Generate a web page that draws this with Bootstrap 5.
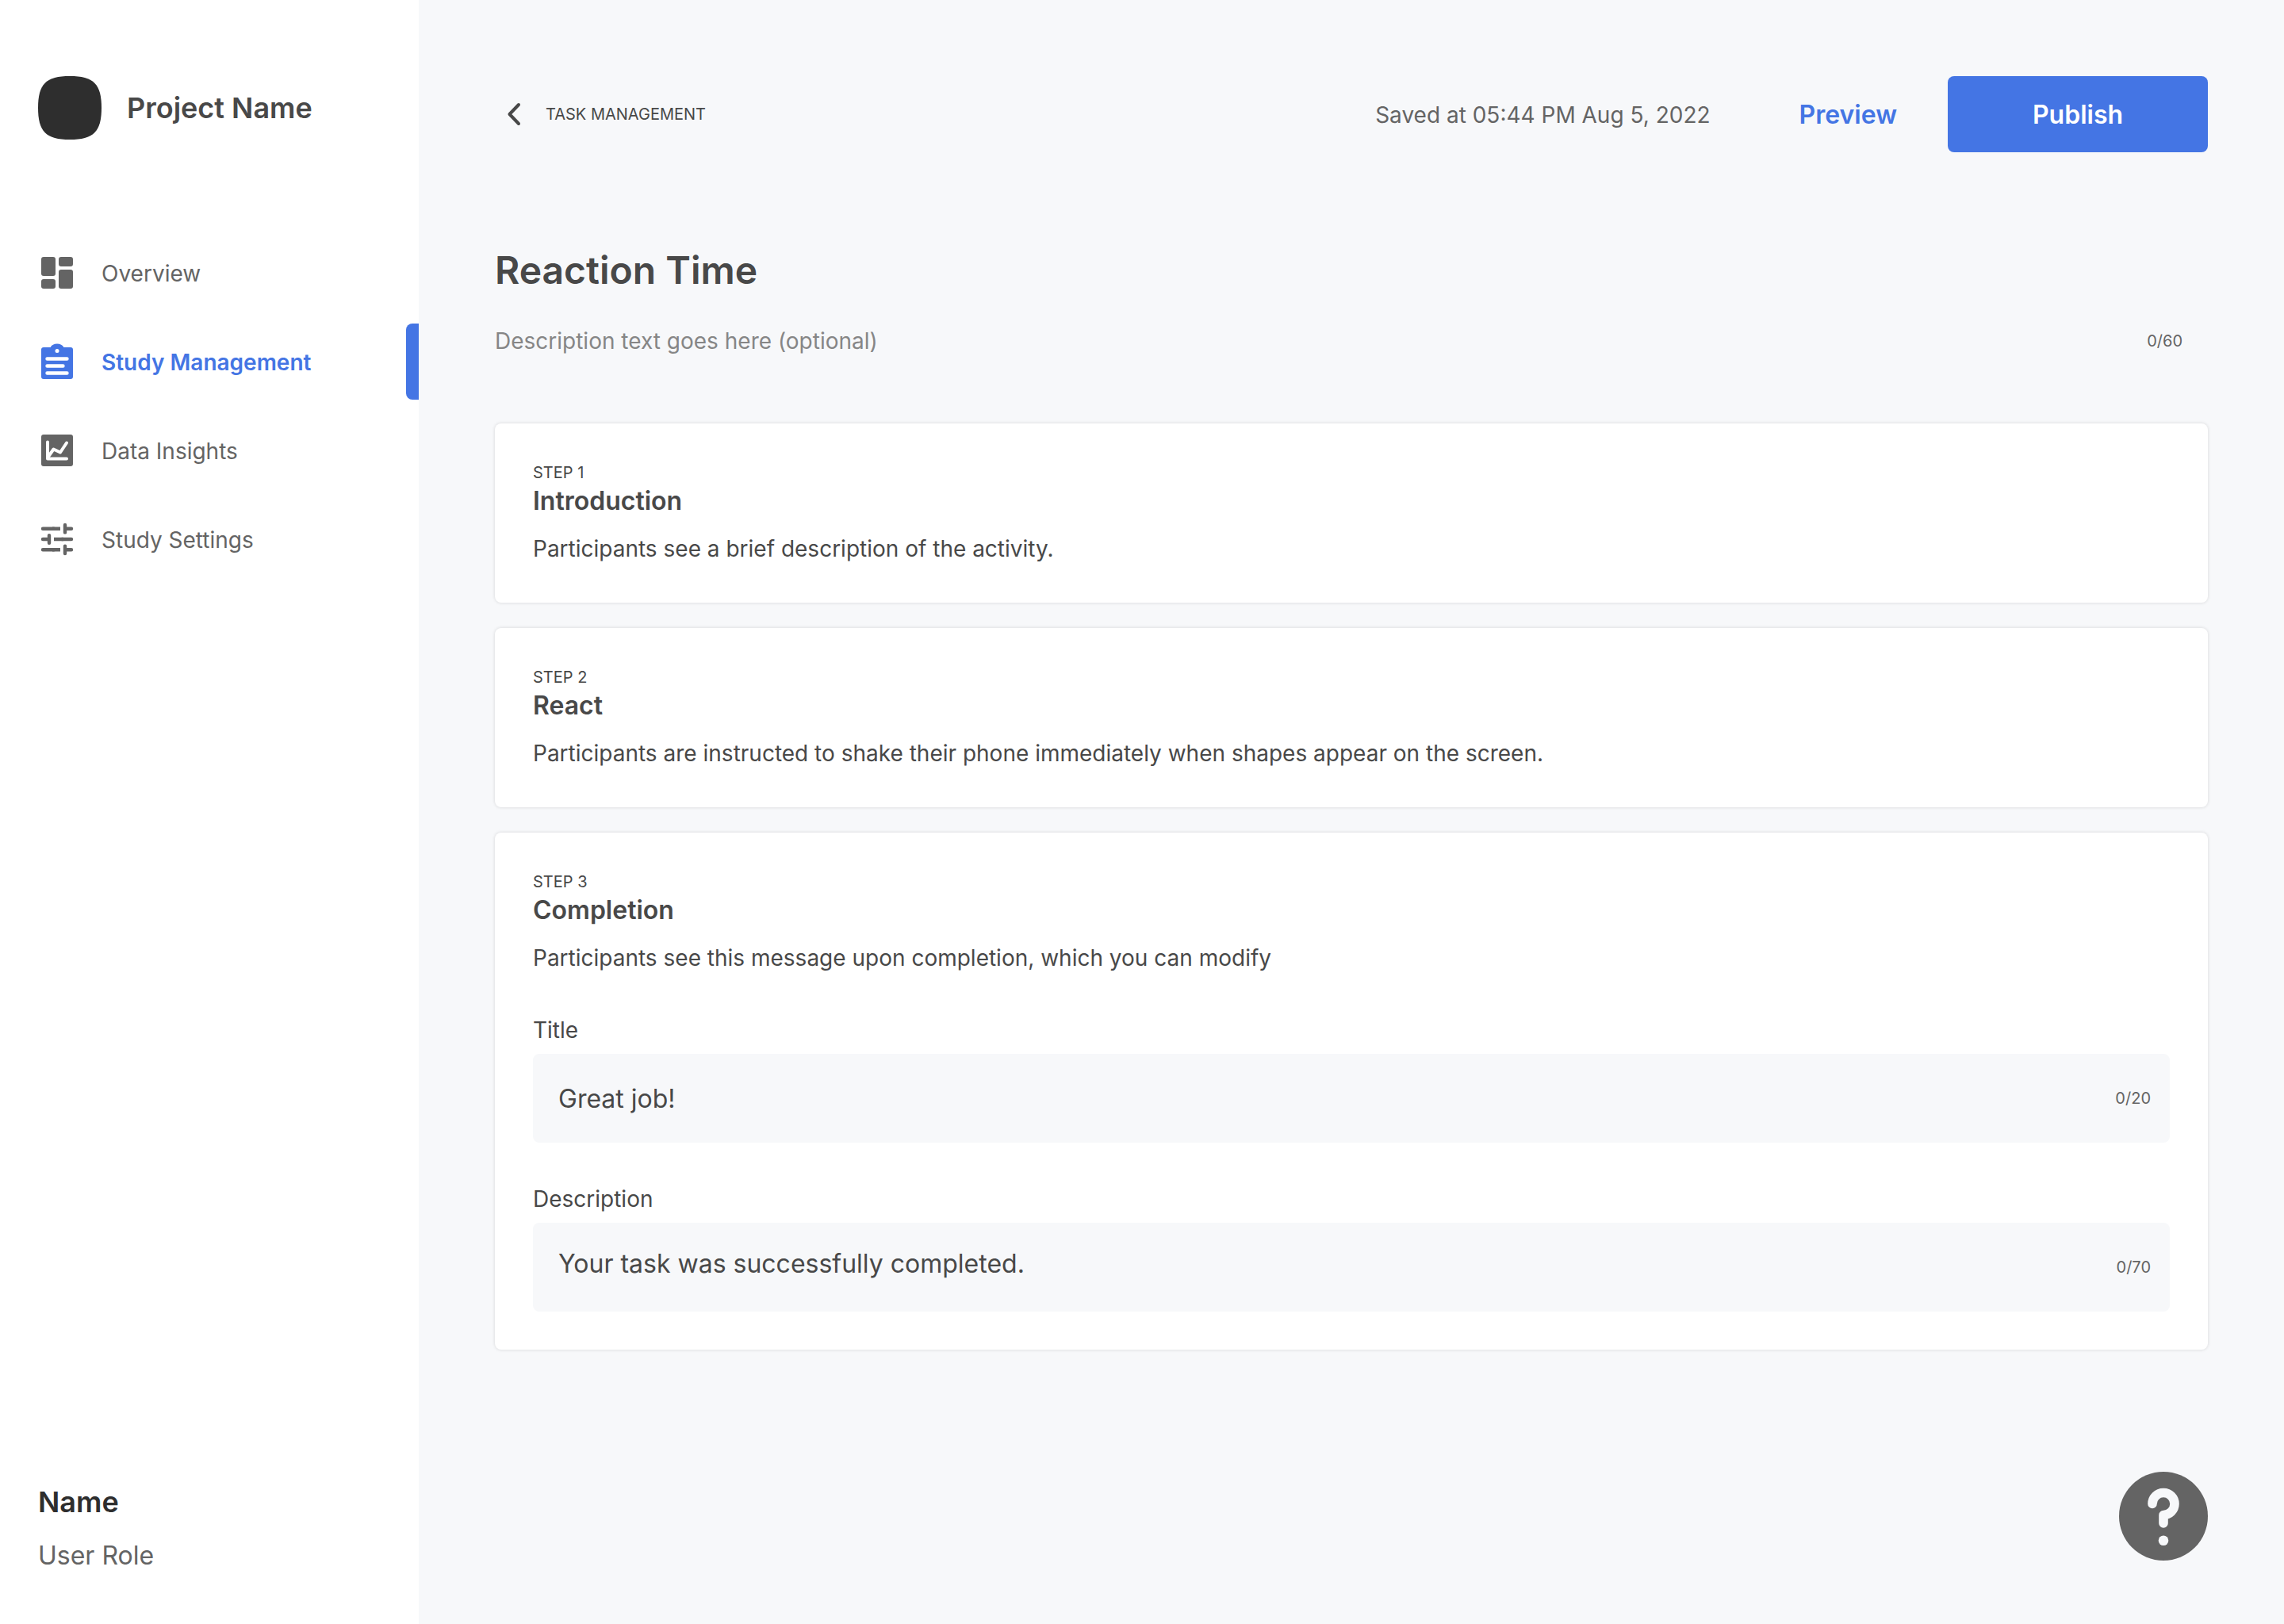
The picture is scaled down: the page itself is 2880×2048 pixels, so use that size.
<!DOCTYPE html>
<html lang="en">
<head>
<meta charset="utf-8">
<meta name="viewport" content="width=device-width, initial-scale=1">
<title>Reaction Time</title>
<link href="https://cdn.jsdelivr.net/npm/bootstrap@5.3.0/dist/css/bootstrap.min.css" rel="stylesheet">
<style>
:root { --blue: #4475e4; --ink: #484848; --muted: #646464; --canvas: #f7f8fa; }
body { font-family: Inter, "Liberation Sans", sans-serif; font-size: 28px; line-height: 40px; color: var(--ink); background: var(--canvas); }
a { text-decoration: none; }
.sidebar { width: 528px; padding: 96px 0 62px 48px; }
.brand { height: 80px; gap: 32px; font-size: 36px; font-weight: 600; margin-bottom: 120px; }
.side-nav { gap: 16px; }
.side-nav .nav-link { height: 96px; padding: 0; gap: 32px; color: var(--muted); }
.side-nav .nav-link span, .topbar .saved { padding-top: 2px; }
.side-nav .nav-link.active { color: var(--blue); font-weight: 600; }
.side-nav .nav-link.active::after { content: ""; width: 16px; height: 96px; margin-left: auto; background: var(--blue); border-radius: 8px 0 0 8px; }
.user-name { font-size: 36px; line-height: 56px; font-weight: 600; color: #2e2e2e; }
.user-role { font-size: 32px; line-height: 48px; color: var(--muted); margin-top: 16px; }
.workspace { padding: 96px 96px 80px; }
.topbar { height: 96px; }
.back-link { gap: 16px; padding-left: 0; font-size: 20px; color: var(--ink); }
.saved { color: var(--muted); }
.btn-preview, .btn-publish { font-size: 32px; font-weight: 600; line-height: 48px; border: 0; padding-top: 25px; padding-bottom: 23px; }
.btn-preview { color: var(--blue); padding-left: 112px; padding-right: 64px; }
.btn-publish { width: 328px; height: 96px; border-radius: 8px; color: #fff; background: var(--blue); }
.page-title { font-size: 48px; line-height: 64px; font-weight: 600; margin: 117px 0 0; }
.desc-row { height: 80px; margin: 17px 0 64px; padding-right: 32px; }
.desc-row .form-control { font-size: 28px; line-height: 40px; padding: 0; }
.desc-row .form-control::placeholder { color: #868686; opacity: 1; }
.counter { font-size: 20px; line-height: 28px; color: var(--muted); }
.steps { gap: 32px; }
.step-card { padding: 48px; border: 0; border-radius: 8px; color: var(--ink); box-shadow: 0 0 4px rgba(0, 0, 0, .14); }
.step-label { font-size: 20px; line-height: 28px; }
.step-title { font-size: 32px; line-height: 44px; font-weight: 600; margin: 0 0 18px; }
.field { margin-top: 51px; }
.field-label { margin-bottom: 10px; }
.field-box { height: 112px; padding-right: 24px; border-radius: 8px; background: var(--canvas); }
.field-box .form-control { height: 112px; padding: 28px 32px; font-size: 32px; line-height: 48px; color: var(--ink); resize: none; overflow: hidden; }
.field-box input.form-control { padding: 32px; }
</style>
</head>
<body>
<div class="d-flex min-vh-100">
  <aside class="sidebar bg-white d-flex flex-column flex-shrink-0">
    <div class="brand d-flex align-items-center">
      <svg width="80" height="80" viewBox="0 0 80 80" fill="#2e2e2e" aria-hidden="true"><path d="M40 0C70 0 80 10 80 40S70 80 40 80 0 70 0 40 10 0 40 0Z"/></svg>
      <span>Project Name</span>
    </div>
    <nav class="side-nav nav flex-column flex-nowrap">
      <a class="nav-link d-flex align-items-center" href="#">
        <svg width="48" height="48" viewBox="0 0 48 48" fill="currentColor" aria-hidden="true"><rect x="4" y="4" width="18" height="24" rx="3"/><rect x="26" y="4" width="18" height="12" rx="3"/><rect x="4" y="32" width="18" height="12" rx="3"/><rect x="26" y="20" width="18" height="24" rx="3"/></svg>
        <span>Overview</span>
      </a>
      <a class="nav-link active d-flex align-items-center" href="#" aria-current="page">
        <svg width="48" height="48" viewBox="0 0 48 48" aria-hidden="true"><path fill="currentColor" d="M7 6H15.600C17 3.400 20.200 1.600 24 1.600S31 3.400 32.400 6H41A3 3 0 0 1 44 9V43A3 3 0 0 1 41 46H7A3 3 0 0 1 4 43V9A3 3 0 0 1 7 6Z"/><circle cx="24" cy="10.500" r="2.500" fill="#fff"/><path stroke="#fff" stroke-width="4.400" stroke-linecap="round" d="M11.500 20.500H36.500M11.500 29.500H31.500M11.500 38.500H36.500"/></svg>
        <span>Study Management</span>
      </a>
      <a class="nav-link d-flex align-items-center" href="#">
        <svg width="48" height="48" viewBox="0 0 48 48" fill="none" aria-hidden="true"><rect x="4" y="4" width="40" height="40" rx="3" fill="currentColor"/><g stroke="#fff" stroke-width="4" stroke-linecap="round" stroke-linejoin="round"><path d="M12 13.500V34.500H36"/><path d="M12.500 32.500L19.500 22.500L28 26.500L36 14.500"/></g></svg>
        <span>Data Insights</span>
      </a>
      <a class="nav-link d-flex align-items-center" href="#">
        <svg width="48" height="48" viewBox="0 0 48 48" fill="none" stroke="currentColor" stroke-width="4.400" aria-hidden="true"><path stroke-linecap="round" d="M6 10.700H20M34 6V15.400M34 10.700H42M6 24H14M14 19.300V28.700M30 24H42M6 37.300H20M34 32.600V42M34 37.300H42"/><path d="M18 10.700H28M20 24H32M18 37.300H28"/></svg>
        <span>Study Settings</span>
      </a>
    </nav>
    <div class="mt-auto">
      <div class="user-name">Name</div>
      <div class="user-role">User Role</div>
    </div>
  </aside>

  <main class="workspace flex-grow-1 d-flex flex-column">
    <header class="topbar d-flex align-items-center">
      <a class="back-link d-flex align-items-center" href="#">
        <svg width="48" height="48" viewBox="0 0 48 48" fill="none" stroke="currentColor" stroke-width="4" stroke-linecap="round" stroke-linejoin="round" aria-hidden="true"><path d="M30 12L18.500 24L30 36"/></svg>
        <span>TASK MANAGEMENT</span>
      </a>
      <span class="saved ms-auto">Saved at 05:44 PM Aug 5, 2022</span>
      <button type="button" class="btn btn-preview">Preview</button>
      <button type="button" class="btn btn-publish">Publish</button>
    </header>

    <h1 class="page-title">Reaction Time</h1>
    <div class="desc-row d-flex align-items-center">
      <input type="text" class="form-control border-0 bg-transparent shadow-none" placeholder="Description text goes here (optional)" aria-label="Task description">
      <span class="counter">0/60</span>
    </div>

    <div class="steps d-flex flex-column">
      <section class="card step-card">
        <div class="step-label">STEP 1</div>
        <h2 class="step-title">Introduction</h2>
        <p class="mb-0">Participants see a brief description of the activity.</p>
      </section>
      <section class="card step-card">
        <div class="step-label">STEP 2</div>
        <h2 class="step-title">React</h2>
        <p class="mb-0">Participants are instructed to shake their phone immediately when shapes appear on the screen.</p>
      </section>
      <section class="card step-card">
        <div class="step-label">STEP 3</div>
        <h2 class="step-title">Completion</h2>
        <p class="mb-0">Participants see this message upon completion, which you can modify</p>
        <div class="field">
          <label class="field-label d-block" for="done-title">Title</label>
          <div class="field-box d-flex align-items-center">
            <input type="text" id="done-title" class="form-control border-0 bg-transparent shadow-none" value="Great job!">
            <span class="counter">0/20</span>
          </div>
        </div>
        <div class="field">
          <label class="field-label d-block" for="done-text">Description</label>
          <div class="field-box d-flex align-items-center">
            <textarea id="done-text" rows="1" class="form-control border-0 bg-transparent shadow-none">Your task was successfully completed.</textarea>
            <span class="counter">0/70</span>
          </div>
        </div>
      </section>
    </div>

    <button type="button" class="btn p-0 border-0 rounded-circle mt-auto ms-auto lh-1" aria-label="Help">
      <svg class="d-block" width="112" height="112" viewBox="0 0 112 112" fill="none" aria-hidden="true"><circle cx="56" cy="56" r="56" fill="#646464"/><path stroke="#f7f8fa" stroke-width="11.600" stroke-linecap="round" stroke-linejoin="round" d="M42 40.500A14 14 0 1 1 56 54.500V65"/><circle cx="56" cy="86.700" r="6.300" fill="#f7f8fa"/></svg>
    </button>
  </main>
</div>
<script src="https://cdn.jsdelivr.net/npm/bootstrap@5.3.0/dist/js/bootstrap.bundle.min.js"></script>
</body>
</html>
